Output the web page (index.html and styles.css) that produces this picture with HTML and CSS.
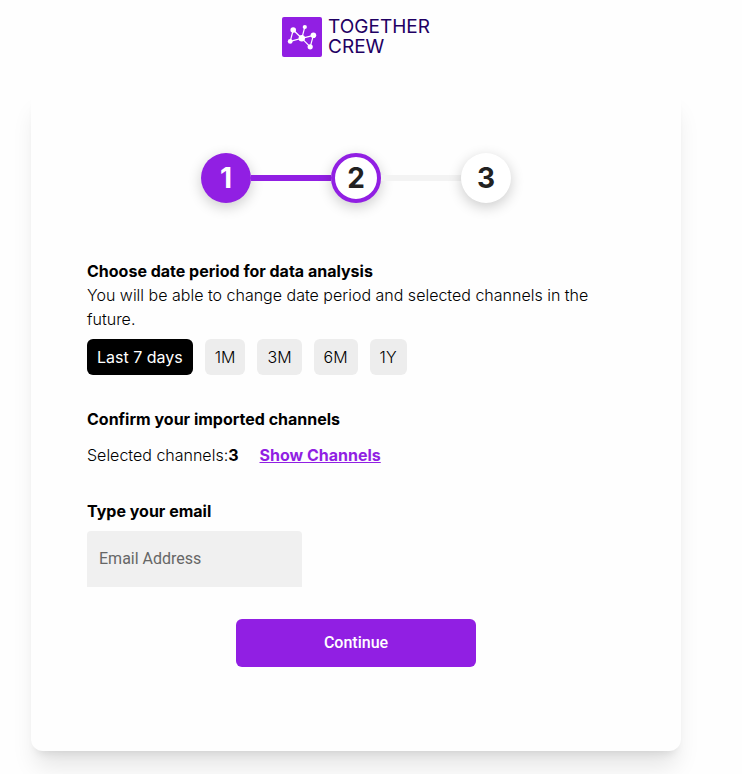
FILE: index.html
```html
<!DOCTYPE html>
<html lang="en">
<head>
  <meta charset="utf-8">
  <meta name="viewport" content="width=device-width, initial-scale=1">
  <title>TogetherCrew</title>
  <link rel="stylesheet" href="styles.css">
</head>
<body>
  <div class="page">
    <header class="brand">
      <svg class="brand-mark" viewBox="0 0 40 40" aria-hidden="true">
        <rect width="40" height="40" rx="2" fill="#911fe3"/>
        <g fill="none" stroke="#fff" stroke-width="1.2">
          <path d="M8.2 24.4 11.2 13 19.8 21.3 8.2 24.4M19.8 21.3 22.8 10M19.8 21.3 31.4 18.3 28.2 29.8 19.8 21.3"/>
        </g>
        <g fill="#fff">
          <circle cx="11.2" cy="13" r="2.8"/>
          <circle cx="8.2" cy="24.4" r="2.4"/>
          <circle cx="19.8" cy="21.3" r="3.2"/>
          <circle cx="22.8" cy="10" r="2.1"/>
          <circle cx="31.4" cy="18.3" r="2.8"/>
          <circle cx="28.2" cy="29.8" r="2.6"/>
        </g>
      </svg>
      <div class="brand-name">TOGETHER<br>CREW</div>
    </header>
    <main class="card">
      <ol class="stepper">
        <li class="step step-done">1</li>
        <li class="track track-done" role="presentation"></li>
        <li class="step step-current" aria-current="step">2</li>
        <li class="track" role="presentation"></li>
        <li class="step">3</li>
      </ol>
      <form class="form">
        <section>
          <h2 class="title">Choose date period for data analysis</h2>
          <p class="text">You will be able to change date period and selected channels in the future.</p>
          <div class="periods">
            <button type="button" class="period period-active">Last 7 days</button>
            <button type="button" class="period">1M</button>
            <button type="button" class="period">3M</button>
            <button type="button" class="period">6M</button>
            <button type="button" class="period">1Y</button>
          </div>
        </section>
        <section class="channels">
          <h2 class="title">Confirm your imported channels</h2>
          <div class="channels-row">
            <p class="text">Selected channels:<b>3</b></p>
            <a class="link" href="#channels">Show Channels</a>
          </div>
        </section>
        <section class="email">
          <label class="title" for="email">Type your email</label>
          <input class="email-input" id="email" type="email" placeholder="Email Address">
        </section>
        <button class="submit" type="submit">Continue</button>
      </form>
    </main>
  </div>
</body>
</html>
```
FILE: styles.css
```css
* {
  box-sizing: border-box;
}

body {
  margin: 0;
  background: #fefefe;
  color: #000;
  font: 300 16px/24px Inter, sans-serif;
}

h2,
p,
ol {
  margin: 0;
  padding: 0;
}

b {
  font-weight: 700;
}

.page {
  padding: 17px 61px 23px 31px;
}

.brand {
  display: flex;
  align-items: center;
  justify-content: center;
  gap: 6px;
}

.brand-mark {
  width: 40px;
  height: 40px;
}

.brand-name {
  color: #1f0063;
  font: 400 19px/20px Inter, sans-serif;
}

.card {
  max-width: 650px;
  margin: 32px auto 0;
  padding: 64px 56px 84px;
  border-radius: 12px;
  background: #fefefe;
  box-shadow: 0 20px 25px -5px rgba(0, 0, 0, 0.1), 0 8px 10px -6px rgba(0, 0, 0, 0.1);
}

.stepper {
  display: flex;
  align-items: center;
  justify-content: center;
  list-style: none;
}

.step {
  display: flex;
  align-items: center;
  justify-content: center;
  width: 50px;
  height: 50px;
  border-radius: 50%;
  background: #fff;
  box-shadow: 0 4px 14px rgba(0, 0, 0, 0.2);
  color: #222;
  font-size: 28px;
  font-weight: 700;
}

.step-done {
  background: #911fe3;
  color: #fff;
}

.step-current {
  border: 4px solid #911fe3;
}

.track {
  width: 80px;
  height: 6px;
  background: #f3f3f3;
}

.track-done {
  background: #911fe3;
}

.form {
  display: flex;
  flex-direction: column;
  gap: 32px;
  margin-top: 56px;
}

.title {
  display: block;
  font-size: 16px;
  font-weight: 700;
}

.periods {
  display: flex;
  flex-wrap: wrap;
  gap: 12px;
  margin-top: 8px;
}

.period {
  height: 36px;
  padding: 0 10px;
  border: 0;
  border-radius: 6px;
  background: #ededed;
  color: #000;
  font: inherit;
}

.period-active {
  background: #000;
  color: #fff;
  font-weight: 400;
}

.channels-row {
  display: flex;
  gap: 21px;
  margin-top: 12px;
}

.link {
  color: #911fe3;
  font-weight: 700;
}

.email-input {
  display: block;
  width: 215px;
  height: 56px;
  margin-top: 8px;
  padding: 0 12px 2px;
  border: 0;
  border-radius: 4px 4px 0 0;
  background: #f0f0f0;
  font: 400 16px/24px Roboto, sans-serif;
}

.email-input::placeholder {
  color: #666;
}

.submit {
  align-self: center;
  width: 240px;
  height: 48px;
  border: 0;
  border-radius: 6px;
  background: #911fe3;
  color: #fff;
  font: 500 16px/24px Roboto, sans-serif;
}
```
